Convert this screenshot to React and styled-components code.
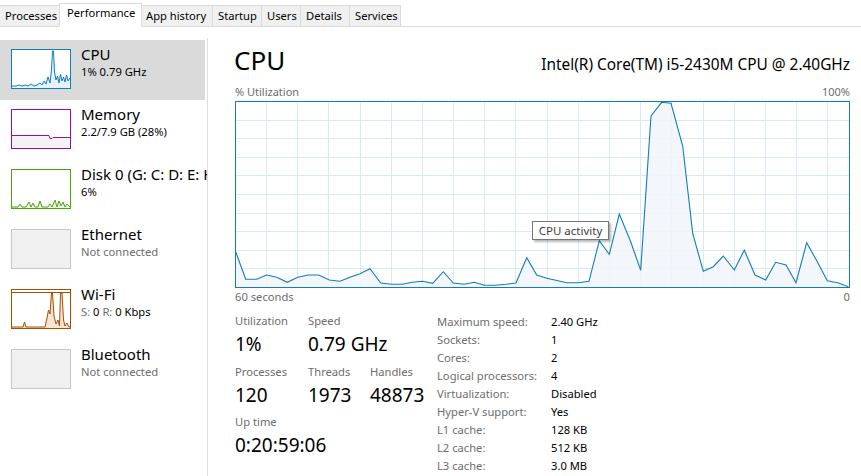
import React from 'react';
import styled, { createGlobalStyle } from 'styled-components';

const GlobalStyle = createGlobalStyle`
  html, body {
    margin: 0;
    padding: 0;
    background: #ffffff;
  }
  body {
    font-family: "Segoe UI", "Noto Sans", sans-serif;
    color: #000000;
  }
`;

const TABS = [
  { label: 'Processes', width: 60 },
  { label: 'Performance', width: 83, active: true },
  { label: 'App history', width: 72 },
  { label: 'Startup', width: 49 },
  { label: 'Users', width: 39 },
  { label: 'Details', width: 49 },
  { label: 'Services', width: 51 },
];

// main graph samples, page coordinates (graph box spans 235..849 x 101..287)
const CPU_POINTS = [
  [235.7, 251.7], [245.7, 279.3], [256.7, 279.3], [266.7, 275], [276.7, 277.3],
  [287.3, 282.3], [297.7, 277.3], [308.3, 275], [318.7, 275], [329.3, 280],
  [340, 281.3], [350, 277.3], [360, 273.7], [370, 268.7], [380.7, 283],
  [391.7, 284.3], [402.3, 284.3], [412.3, 282.3], [422.7, 281.3], [432.7, 283.3],
  [443.3, 271.7], [453.3, 283], [464, 284.3], [474.3, 282.3], [484.3, 285.3],
  [495, 285.3], [506, 284.3], [516, 283], [526.7, 257.7], [536.7, 275],
  [546.7, 278.3], [557, 280.5], [567, 282.7], [578.3, 282.7], [589, 281.3],
  [599.3, 240.7], [609.3, 254.3], [619.3, 214], [630.7, 241.7], [640.7, 270.3],
  [651, 116], [661.7, 102.3], [671, 103.3], [682.7, 146], [692.7, 233.3],
  [703.3, 271.3], [713.3, 266.7], [723.3, 256], [734.3, 270], [744.3, 250],
  [755, 275], [765.7, 280], [775.7, 262.3], [786, 265], [796, 282.7],
  [806.7, 242.7], [817.3, 261.7], [827.3, 280.7], [837.7, 282.7], [848.3, 286.7],
];

const H_LINES = Array.from({ length: 9 }, (_, k) => Math.round(101 + (k + 1) * 18.6) + 0.5);
const V_LINES = Array.from({ length: 19 }, (_, k) => Math.round(266 + k * 31.18) + 0.5);

const toPath = (pts) => pts.map(([x, y], i) => `${i ? 'L' : 'M'}${x} ${y}`).join(' ');
const toArea = (pts, floor) =>
  `${toPath(pts)} L${pts[pts.length - 1][0]} ${floor} L${pts[0][0]} ${floor} Z`;

// sidebar thumbnails, 58x38 inner coordinates
const CPU_THUMB = [
  [0, 36], [4, 36], [7, 35], [10, 36], [13, 35], [16, 36], [19, 34], [22, 36], [25, 35],
  [28, 33], [30, 35], [32, 31], [34, 34], [36, 27], [38, 33], [39.5, 20], [40.5, 1],
  [41.5, 1], [42.5, 22], [44, 30], [45.5, 26], [47, 33], [48.5, 24], [50, 31], [51.5, 27],
  [53, 32], [54.5, 25], [56, 31], [58, 28],
];

const DISK_THUMB = [
  [0, 37], [6, 37], [8, 34], [10, 37], [14, 37], [17, 32], [19, 37], [21, 33], [23, 37],
  [26, 37], [28, 31], [30, 37], [36, 37], [38, 34], [40, 37], [43, 30], [45, 37],
  [47, 31], [49, 36], [51, 32], [53, 37], [55, 34], [58, 37],
];

const WIFI_THUMB = [
  [0, 37], [11, 37], [12.5, 32], [14, 37], [33, 37], [35, 28], [36.5, 20], [38, 24],
  [39.5, 3], [40.5, 3], [42, 26], [44, 34], [46, 30], [47.5, 36], [48.5, 3], [50, 3],
  [51.5, 30], [53, 36], [55, 33], [57, 37], [58, 37],
];

const Thumbnail = ({ kind }) => {
  if (kind === 'cpu') {
    return (
      <Thumb $border="#117dbb">
        <svg width="58" height="38" viewBox="0 0 58 38">
          <path d={toArea(CPU_THUMB, 38)} fill="#e8f2f9" />
          <path d={toPath(CPU_THUMB)} fill="none" stroke="#117dbb" strokeWidth="1" />
        </svg>
      </Thumb>
    );
  }
  if (kind === 'memory') {
    return (
      <Thumb $border="#8b12ae">
        <svg width="58" height="38" viewBox="0 0 58 38">
          <path d="M0 25.5 L37 25.5 L38 28.5 L40 28.5 L41 27.5 L58 27.5 L58 38 L0 38 Z" fill="#f4f2f4" />
          <path d="M0 25.5 L37 25.5 L38 28.5 L40 28.5 L41 27.5 L58 27.5" fill="none" stroke="#8b12ae" strokeWidth="1" />
        </svg>
      </Thumb>
    );
  }
  if (kind === 'disk') {
    return (
      <Thumb $border="#4da60c">
        <svg width="58" height="38" viewBox="0 0 58 38">
          <path d={toArea(DISK_THUMB, 38)} fill="#eff7e9" />
          <path d={toPath(DISK_THUMB)} fill="none" stroke="#4da60c" strokeWidth="1" />
        </svg>
      </Thumb>
    );
  }
  if (kind === 'wifi') {
    return (
      <Thumb $border="#a74f01">
        <svg width="58" height="38" viewBox="0 0 58 38">
          <line x1="0" y1="2.5" x2="58" y2="2.5" stroke="#a74f01" strokeWidth="1" />
          <path d={toArea(WIFI_THUMB, 38)} fill="#f6e4d4" />
          <path d={toPath(WIFI_THUMB)} fill="none" stroke="#a74f01" strokeWidth="1" />
        </svg>
      </Thumb>
    );
  }
  return <Thumb $border="#c6c6c6" $bg="#f0f0f0" />;
};

const SIDE_ITEMS = [
  { kind: 'cpu', name: 'CPU', sub: '1% 0.79 GHz', active: true },
  { kind: 'memory', name: 'Memory', sub: '2.2/7.9 GB (28%)' },
  { kind: 'disk', name: 'Disk 0 (G: C: D: E: H:)', sub: '6%' },
  { kind: 'ethernet', name: 'Ethernet', sub: 'Not connected', muted: true },
  { kind: 'wifi', name: 'Wi-Fi', wifi: true },
  { kind: 'bluetooth', name: 'Bluetooth', sub: 'Not connected', muted: true },
];

const INFO = [
  ['Maximum speed:', '2.40 GHz'],
  ['Sockets:', '1'],
  ['Cores:', '2'],
  ['Logical processors:', '4'],
  ['Virtualization:', 'Disabled'],
  ['Hyper-V support:', 'Yes'],
  ['L1 cache:', '128 KB'],
  ['L2 cache:', '512 KB'],
  ['L3 cache:', '3.0 MB'],
];

export default function App () {
  return (
    <Window>
      <GlobalStyle />
      <TabBar>
        {TABS.map((t) => (
          <Tab key={t.label} $width={t.width} $active={t.active}>{t.label}</Tab>
        ))}
      </TabBar>
      <Body>
        <Sidebar>
          {SIDE_ITEMS.map((item) => (
            <SideItem key={item.kind} $active={item.active}>
              <Thumbnail kind={item.kind} />
              <ItemText>
                <ItemName>{item.name}</ItemName>
                {item.wifi ? (
                  <ItemSub>
                    <Muted>S: </Muted>0 <Muted>R: </Muted>0 Kbps
                  </ItemSub>
                ) : (
                  <ItemSub $muted={item.muted}>{item.sub}</ItemSub>
                )}
              </ItemText>
            </SideItem>
          ))}
        </Sidebar>
        <Main>
          <Header>
            <Title>CPU</Title>
            <Model>Intel(R) Core(TM) i5-2430M CPU @ 2.40GHz</Model>
          </Header>
          <AxisRow>
            <span>% Utilization</span>
            <span>100%</span>
          </AxisRow>
          <GraphBox>
            <svg width="613" height="185" viewBox="236 102 613 185">
              {H_LINES.map((y) => (
                <line key={`h${y}`} x1="236" x2="849" y1={y} y2={y} stroke="#d9eaf4" />
              ))}
              {V_LINES.map((x) => (
                <line key={`v${x}`} x1={x} x2={x} y1="102" y2="287" stroke="#d9eaf4" />
              ))}
              <path d={toArea(CPU_POINTS, 287)} fill="#f1f6fa" fillOpacity="0.85" />
              <path d={toPath(CPU_POINTS)} fill="none" stroke="#117dbb" strokeWidth="1.1" />
            </svg>
            <Tooltip>CPU activity</Tooltip>
          </GraphBox>
          <AxisRow $bottom>
            <span>60 seconds</span>
            <span>0</span>
          </AxisRow>
          <StatsArea>
            <StatGrid>
              <StatCell>
                <StatLabel>Utilization</StatLabel>
                <StatValue>1%</StatValue>
              </StatCell>
              <StatCell $span={2}>
                <StatLabel>Speed</StatLabel>
                <StatValue>0.79 GHz</StatValue>
              </StatCell>
              <StatCell>
                <StatLabel>Processes</StatLabel>
                <StatValue>120</StatValue>
              </StatCell>
              <StatCell>
                <StatLabel>Threads</StatLabel>
                <StatValue>1973</StatValue>
              </StatCell>
              <StatCell>
                <StatLabel>Handles</StatLabel>
                <StatValue>48873</StatValue>
              </StatCell>
              <StatCell $span={3}>
                <StatLabel>Up time</StatLabel>
                <StatValue>0:20:59:06</StatValue>
              </StatCell>
            </StatGrid>
            <InfoTable>
              {INFO.map(([k, v]) => (
                <React.Fragment key={k}>
                  <InfoKey>{k}</InfoKey>
                  <InfoValue>{v}</InfoValue>
                </React.Fragment>
              ))}
            </InfoTable>
          </StatsArea>
        </Main>
      </Body>
    </Window>
  );
}

const Window = styled.div`
  width: 861px;
  height: 476px;
  overflow: hidden;
  display: flex;
  flex-direction: column;
  background: #ffffff;
`;

const TabBar = styled.div`
  display: flex;
  align-items: flex-end;
  height: 27px;
  border-bottom: 1px solid #dadada;
  box-sizing: border-box;
`;

const Tab = styled.div`
  box-sizing: border-box;
  width: ${({ $width }) => $width}px;
  height: ${({ $active }) => ($active ? 24 : 21)}px;
  margin-bottom: ${({ $active }) => ($active ? -1 : 0)}px;
  margin-left: ${({ $active }) => ($active ? -1 : 0)}px;
  margin-right: ${({ $active }) => ($active ? -1 : 0)}px;
  padding-left: ${({ $active }) => ($active ? 7 : 5)}px;
  border: 1px solid #dadada;
  border-left: ${({ $active }) => ($active ? '1px solid #dadada' : 'none')};
  border-bottom: ${({ $active }) => ($active ? '1px solid #ffffff' : 'none')};
  background: ${({ $active }) => ($active ? '#ffffff' : '#f0f0f0')};
  font-size: 11.2px;
  line-height: ${({ $active }) => ($active ? 18 : 19)}px;
  white-space: nowrap;
  color: #000000;
  position: relative;
  z-index: ${({ $active }) => ($active ? 1 : 0)};
`;

const Body = styled.div`
  flex: 1;
  display: flex;
  min-height: 0;
`;

const Sidebar = styled.div`
  width: 207px;
  flex-shrink: 0;
  margin-top: 11px;
  padding-top: 2px;
  border-right: 1px solid #dddddd;
  display: flex;
  flex-direction: column;
  overflow: hidden;
`;

const SideItem = styled.div`
  display: flex;
  align-items: flex-start;
  gap: 10px;
  width: 205px;
  height: 60px;
  box-sizing: border-box;
  padding: 9px 0 0 11px;
  background: ${({ $active }) => ($active ? '#dadada' : 'transparent')};
`;

const Thumb = styled.div`
  flex-shrink: 0;
  width: 60px;
  height: 40px;
  box-sizing: border-box;
  border: 1px solid ${({ $border }) => $border};
  background: ${({ $bg }) => $bg || '#ffffff'};
  svg {
    display: block;
  }
`;

const ItemText = styled.div`
  display: flex;
  flex-direction: column;
  white-space: nowrap;
  margin-top: -5px;
`;

const ItemName = styled.div`
  font-size: 15px;
  line-height: 20px;
  color: #000000;
`;

const ItemSub = styled.div`
  font-size: 11.2px;
  line-height: 16px;
  color: ${({ $muted }) => ($muted ? '#6d6d6d' : '#000000')};
`;

const Muted = styled.span`
  color: #6d6d6d;
`;

const Main = styled.div`
  flex: 1;
  min-width: 0;
  padding: 0 11px 0 27px;
  display: flex;
  flex-direction: column;
`;

const Header = styled.div`
  display: flex;
  justify-content: space-between;
  align-items: baseline;
  margin-top: 17px;
  height: 32px;
`;

const Title = styled.div`
  font-size: 26px;
  line-height: 32px;
  margin-left: -1px;
`;

const Model = styled.div`
  font-size: 15.4px;
  line-height: 20px;
  white-space: nowrap;
`;

const AxisRow = styled.div`
  display: flex;
  justify-content: space-between;
  font-size: ${({ $bottom }) => ($bottom ? 11.2 : 11)}px;
  line-height: ${({ $bottom }) => ($bottom ? 16 : 15)}px;
  color: #6d6d6d;
  margin-top: ${({ $bottom }) => ($bottom ? 1 : 8)}px;
  margin-bottom: ${({ $bottom }) => ($bottom ? 0 : 2)}px;
`;

const GraphBox = styled.div`
  position: relative;
  width: 615px;
  height: 187px;
  box-sizing: border-box;
  border: 1px solid #117dbb;
  svg {
    display: block;
  }
`;

const Tooltip = styled.div`
  position: absolute;
  left: 296px;
  top: 119px;
  width: 77px;
  height: 19px;
  box-sizing: border-box;
  border: 1px solid #767676;
  background: #ffffff;
  box-shadow: 2px 2px 2px rgba(0, 0, 0, 0.28);
  font-size: 11.5px;
  line-height: 17px;
  text-align: center;
  color: #3c3c3c;
  white-space: nowrap;
`;

const StatsArea = styled.div`
  display: flex;
  margin-top: 8px;
`;

const StatGrid = styled.div`
  display: grid;
  grid-template-columns: 73px 62px 67px;
  row-gap: 6.5px;
  align-content: start;
`;

const StatCell = styled.div`
  grid-column: span ${({ $span }) => $span || 1};
  display: flex;
  flex-direction: column;
  white-space: nowrap;
`;

const StatLabel = styled.div`
  font-size: 11.2px;
  line-height: 16px;
  color: #6d6d6d;
`;

const StatValue = styled.div`
  font-size: 19px;
  line-height: 26px;
  margin-top: 2px;
  color: #000000;
`;

const InfoTable = styled.div`
  display: grid;
  grid-template-columns: 114px auto;
  grid-auto-rows: 18px;
  font-size: 11.2px;
  line-height: 18px;
  white-space: nowrap;
`;

const InfoKey = styled.div`
  color: #6d6d6d;
`;

const InfoValue = styled.div`
  color: #000000;
`;
